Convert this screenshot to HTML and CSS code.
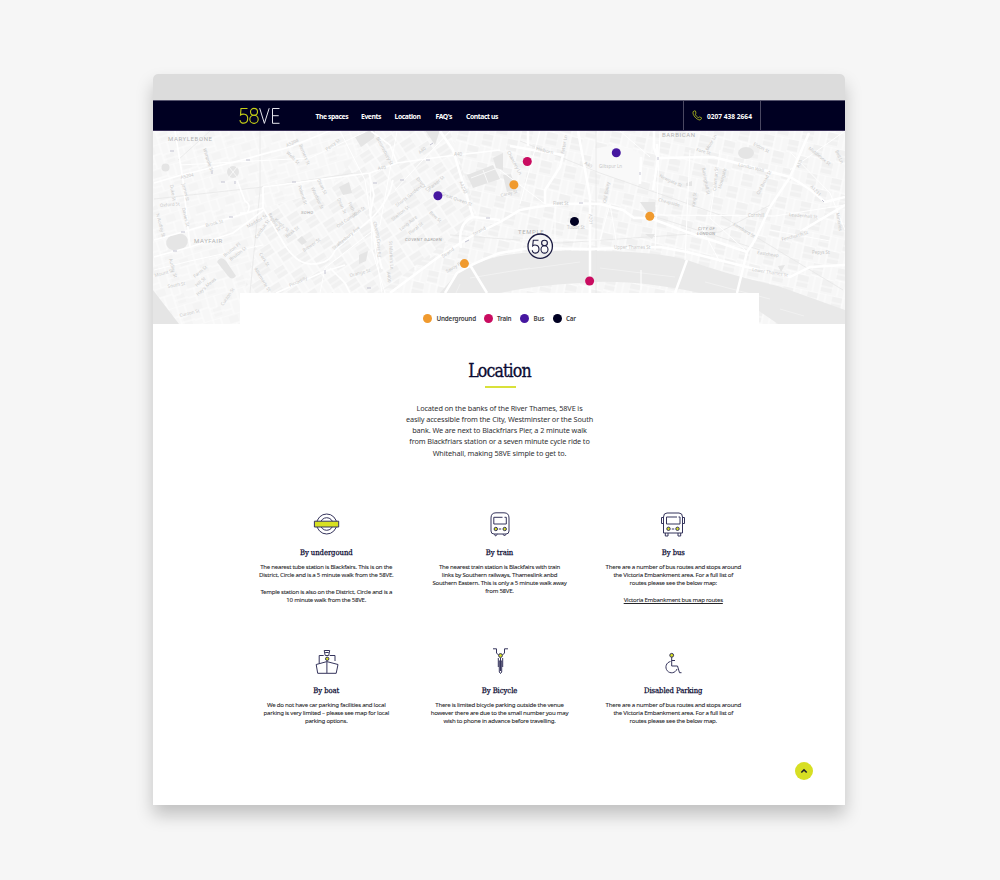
FILE: index.html
```html
<!DOCTYPE html>
<html lang="en">
<head>
<meta charset="utf-8">
<title>58VE – Location</title>
<link rel="stylesheet" href="styles.css">
</head>
<body>
<div class="browser">
  <div class="chrome"></div>
  <header class="header">
    <svg class="logo" viewBox="0 0 42 18" aria-label="58VE">
      <g class="logo-num"><path d="M8.500 1.500H2L1.500 8C3 6.700 8.700 6.300 8.700 11.500C8.700 17.600 1 17.300 1 13"/><ellipse cx="15" cy="4.800" rx="3.500" ry="3.400"/><ellipse cx="15" cy="12.300" rx="4.200" ry="4.100"/></g>
      <path class="logo-ve" d="M20.700 1.200L25.400 16.400L30.200 1.200M40.500 1.500H33.500V16.300H40.500M33.500 8.700H39.700"/>
    </svg>
    <nav class="nav"><a class="n1">The spaces</a><a class="n2">Events</a><a class="n3">Location</a><a class="n4">FAQ's</a><a class="n5">Contact us</a></nav>
    <div class="phone">
      <svg viewBox="0 0 10 11"><path d="M2.600.800L1.100 1.700C.1 4.900 4.700 9.900 8 10L9.500 8.800L9.300 7.600L7.300 6.900L6.400 7.600C4.800 6.900 3.700 5.500 3.200 4.100L4 3.200L3.500 1.100Z"/></svg>
      <span>0207 438 2664</span>
    </div>
  </header>
  <section class="map">
    <svg class="map-art" viewBox="153 131 692 193">
      <defs>
        <pattern id="pa" width="31" height="23" patternUnits="userSpaceOnUse" patternTransform="rotate(-17)"><path fill="#f4f4f4" d="M2 2h9v7H2zM20 12h8v9h-8z"/><path class="st" d="M0 0H31M0 10H17M17 0V23M8 10V23M25 0V12H17M17 17H31M0 18H8"/></pattern>
        <pattern id="pb" width="27" height="25" patternUnits="userSpaceOnUse" patternTransform="rotate(-33)"><path fill="#f1f1f1" d="M1 1h11v10H1zM14 13h12v11h-12z"/><path class="st" d="M0 0H27M0 12H27M13 0V25M6 12V25M20 0V12M13 19H27M0 6H13"/></pattern>
        <pattern id="pc" width="25" height="29" patternUnits="userSpaceOnUse" patternTransform="rotate(12)"><path fill="#f1f1f1" d="M1 1h10v11H1zM13 15h11v12h-11z"/><path class="st" d="M0 0H25M0 13L25 15M12 0V29M5 13V29M19 0V15M12 22H25M0 7H12"/></pattern>
      </defs>
      <path fill="#f7f7f7" d="M153 131H845V324H153z"/>
      <path fill="url(#pa)" d="M153 131H375L330 190L264 208L244 324H153z"/>
      <path fill="url(#pb)" d="M375 131H450L478 217L440 255L380 293H244L264 208L330 190z"/>
      <path fill="url(#pc)" d="M450 131H845V324H740V293H380L478 217z"/>
      <path fill="#f9f9f9" d="M592 150Q620 140 642 155L640 184L596 174z"/>
      <g class="park">
        <ellipse cx="177" cy="242" rx="11" ry="8.500" transform="rotate(-12 177 242)"/><circle cx="233" cy="172" r="6"/><circle cx="165.500" cy="167.500" r="4"/>
        <path d="M355 137l16-7h4l-1 8-13 9z"/><path d="M425 130h15l-5 15z"/><path d="M467 175l26-10 7 14-27 9z"/><path d="M493 158l10-5v17l-7-2z"/><path d="M339 187l10-5 3 11-9 2z"/><path d="M359 255l9-4-2 10-7 3z"/><path d="M297 240l5-4 5 6-5 3z"/><path d="M217 262q4-7 9-1l10 15q-4 5-8 0z"/><path d="M153 290l26 34h-26z"/>
        <ellipse cx="746" cy="153" rx="8" ry="6"/><path d="M640 202h15v10h-8z"/><path d="M503 175l8-1 5 16-9 2z"/><path d="M645 234h10l-3 5zM686 183l6-2v5h-6zM778 266l7-1-4 7z"/>
      </g>
      <path d="M229 167l8 10m0-10l-8 10M471 178l24-9M483 170l5 13" stroke="#f8f8f8" fill="none"/>
      <path fill="#e9e9e9" d="M440 293L457 273Q475 262 500 256Q535 250 590 251Q655 251 687 260Q732 276 778 286L845 310V324H778L759 311L700 293Q630 278 580 283Q535 285 500 293z"/>
      <path d="M780 309l24 7M460 284l-4 9M520 270l60-8M600 268l75 9M705 282l65 17M470 278l60-10" stroke="#f1f1f1" fill="none"/>
      <path d="M154 199L263 187L355 173M260 131V190L247 324M520 141L600 173L720 215L843 290M450 235L560 243L720 232L770 205M596 131V293M178 160L210 131M650 215L760 250" stroke="#e7e7e7" stroke-width=".8" fill="none"/>
      <g class="road minor">
        <path d="M180 165L310 158L365 132M154 270L190 261L263 245M320 293L325 268L380 225L397 131M340 131L365 180L382 293M370 173L372 250L385 293M395 190L450 131M500 170L545 204L590 205M520 240L600 240L610 204M660 131L655 250M690 150L685 260M720 150L710 218L745 250M655 215L775 216L845 205M770 230L830 241M800 231L845 205M790 170L845 131M540 131L520 204M620 131L650 157M641 270V290M610 204L616 240M790 152L830 193L845 230M700 225L720 262M555 204V240"/>
      </g>
      <g class="road">
        <path d="M154 183L178 176L238 161L290 147L332 130M263 187L370 173L397 163L440 157L500 150M154 240L183 232L263 208M154 257L190 247L233 233L264 210M175 131L183 180L190 247M237 180L245 201Q252 205 247 213L240 213M397 163L390 145L371 131"/>
        <path d="M263 187V208L280 237Q295 265 312 264Q330 264 335 250L373 217Q390 199 393 180M330 268L345 283L350 293M276 293L323 272L345 265M369 173L374 195L370 215L382 269" />
        <path class="wide" d="M440 131L453 150L473 217Q457 223 461 248M473 217L500 220M390 293L437 258L470 237L500 222L520 210Q560 202 600 204L623 210L634 218L650 218L687 232L747 252L755 240L770 207L790 177L809 133M578 131L590 197V293M657 144L658 158L713 157L733 162L790 177Q810 188 825 202L845 197M654 131V148L658 158L653 190M545 204V190L560 167L563 155L533 150L510 146M641 157L640 184M528 131V146"/>
        <path class="wide" d="M445 293L457 273Q475 262 500 253L530 248L588 249L660 247L687 252L747 267L790 277L810 267L845 265M470 265L487 293M687 260L675 293M747 252L737 293M803 230L845 205"/>
      </g>
      <g class="arrows"><path d="M170 151h4M246 160h4M221 182h4M212 171v3M235 181v3M229 217h4M181 232h4M292 182h4M373 183h4M426 160h4M400 180h4M430 145l3-2M465 242l4-2M486 218h4M173 251h4M640 175v-3M658 157v3M579 203h4M822 200l2 2M367 288h4M325 270v4"/></g>
      <g class="labels">
        <text x="168" y="140.500" class="area">MARYLEBONE</text><text x="194" y="242.500" class="area">MAYFAIR</text><text x="662" y="137" class="area">BARBICAN</text><text x="518" y="233.500" class="area">TEMPLE</text>
        <text x="301" y="214" class="sm">SOHO</text><text x="405" y="241" class="sm">COVENT GARDEN</text><text x="698" y="229.500" class="sm">CITY OF</text><text x="697" y="234.500" class="sm">LONDON</text>
        <text transform="translate(203 149) rotate(72)">Wimpole St</text><text transform="translate(181 179) rotate(-12)">A5204</text><text transform="translate(287 147) rotate(-25)">A5204</text><text transform="translate(286 153) rotate(45)">Wells St</text><text transform="translate(299 145) rotate(68)">Berners St</text><text transform="translate(327 151) rotate(-38)">Percy St</text><text transform="translate(376 138) rotate(62)">Bloomsbury St</text><text transform="translate(378 170) rotate(-8)">A40</text><text transform="translate(420 154) rotate(-40)">A40</text><text transform="translate(454 156)">A40</text><text transform="translate(459 182) rotate(65)">A4200</text><text transform="translate(160 207) rotate(-5)">Oxford St</text><text transform="translate(170 185) rotate(80)">Duke St</text><text transform="translate(182 184) rotate(76)">James St</text><text transform="translate(182 208) rotate(77)">Davies St</text><text transform="translate(156 214) rotate(75)">N Audley St</text><text transform="translate(206 227) rotate(-15)">Brook St</text><text transform="translate(248 228) rotate(-30)">Maddox St</text><text transform="translate(257 239) rotate(-55)">Conduit St</text><text transform="translate(268 214) rotate(60)">Regent St</text><text transform="translate(274 220) rotate(42)">Kingly St</text><text transform="translate(287 238) rotate(-38)">Beak St</text><text transform="translate(304 252) rotate(-35)">Brewer St</text><text transform="translate(298 186) rotate(72)">Poland St</text><text transform="translate(311 188) rotate(65)">Wardour St</text><text transform="translate(317 180) rotate(63)">Dean St</text><text transform="translate(337 199) rotate(65)">Dean St</text><text transform="translate(348 203) rotate(65)">Frith St</text><text transform="translate(338 228) rotate(-35)">Old Compton St</text><text transform="translate(334 250) rotate(-40)">Shaftesbury Ave</text><text transform="translate(373 222) rotate(75)">Charing</text><text transform="translate(377 239) rotate(88)">Cross Rd</text><text transform="translate(389 241) rotate(87)">St Martin's Ln</text><text transform="translate(397 207) rotate(-38)">Shorts Gardens</text><text transform="translate(393 221) rotate(-39)">Shelton St</text><text transform="translate(401 231) rotate(-39)">Long Acre</text><text transform="translate(410 235) rotate(-39)">Floral St</text><text transform="translate(416 179) rotate(47)">Drury Ln</text><text transform="translate(430 190) rotate(-40)">Parker St</text><text transform="translate(441 195) rotate(20)">Great Queen St</text><text transform="translate(429 213) rotate(42)">Bow St</text><text transform="translate(443 258) rotate(-35)">Strand</text><text transform="translate(474 236) rotate(-30)">Strand</text><text transform="translate(447 273) rotate(-30)">Savoy Pl</text><text transform="translate(387 272) rotate(85)">A400</text><text transform="translate(350 277) rotate(-14)">Orange St</text><text transform="translate(290 287) rotate(-24)">Piccadilly</text><text transform="translate(225 257) rotate(-38)">Bruton Pl</text><text transform="translate(231 261) rotate(-38)">Bruton St</text><text transform="translate(259 254) rotate(57)">Cork St</text><text transform="translate(254 269) rotate(58)">Albemarle St</text><text transform="translate(169 259) rotate(75)">Audley St</text><text transform="translate(155 277) rotate(-15)">Mount St</text><text transform="translate(168 288) rotate(-10)">South St</text><text transform="translate(195 278) rotate(-40)">Farm St</text><text transform="translate(197 287) rotate(-42)">Hill St</text><text transform="translate(198 296) rotate(-42)">Hay's Mews</text><text transform="translate(223 306) rotate(-55)">Curzon St</text><text transform="translate(180 317) rotate(-14)">Curzon St</text>
        <text transform="translate(536 150) rotate(14)">Holborn</text><text transform="translate(507 152) rotate(62)">Chancery Ln</text><text transform="translate(584 164) rotate(30)">A40</text><text transform="translate(599 168)">Giltspur Ln</text><text transform="translate(501 197) rotate(-14)">Carey St</text><text transform="translate(553 205)">Fleet St</text><text transform="translate(567 229)">Tudor St</text><text transform="translate(589 214) rotate(88)">A201</text><text transform="translate(606 203) rotate(-80)">Old Bailey</text><text transform="translate(564 154) rotate(-80)">Fetter Ln</text><text transform="translate(659 177) rotate(25)">Newgate St</text><text transform="translate(658 201) rotate(15)">Cheapside</text><text transform="translate(695 207) rotate(-85)">King St</text><text transform="translate(702 168) rotate(80)">Basinghall St</text><text transform="translate(716 191) rotate(-85)">Coleman St</text><text transform="translate(721 189) rotate(-75)">Moorgate</text><text transform="translate(738 166) rotate(13)">London Wall</text><text transform="translate(759 195) rotate(-62)">Old Broad St</text><text transform="translate(748 217)">Cornhill</text><text transform="translate(789 216) rotate(5)">Leadenhall St</text><text transform="translate(782 241) rotate(-15)">Fenchurch St</text><text transform="translate(733 225) rotate(32)">Lombard St</text><text transform="translate(757 254) rotate(8)">Eastcheap</text><text transform="translate(812 254)">Pepys St</text><text transform="translate(614 249)">Upper Thames St</text><text transform="translate(752 271) rotate(9)">Lower Thames St</text><text transform="translate(696 151) rotate(15)">Fore St</text><text transform="translate(753 145) rotate(28)">Eldon St</text><text transform="translate(799 168) rotate(-65)">A10</text><text transform="translate(810 187) rotate(45)">A1211</text><text transform="translate(808 149) rotate(38)">Middlesex St</text><text transform="translate(835 151) rotate(65)">Bell Ln</text><text transform="translate(708 151) rotate(-60)">Moor Ln</text><text transform="translate(836 213) rotate(80)">Minories</text>
      </g>
      <g>
        <g fill="#f09a2e"><circle cx="513.900" cy="184.700" r="4.500"/><circle cx="649.800" cy="216.200" r="4.500"/><circle cx="464.400" cy="263.600" r="4.500"/></g>
        <g fill="#c90c60"><circle cx="527.300" cy="161.500" r="4.500"/><circle cx="589.600" cy="281" r="4.500"/></g>
        <g fill="#4617a0"><circle cx="616.300" cy="152.700" r="4.500"/><circle cx="437.900" cy="195.700" r="4.500"/></g>
        <circle fill="#000022" cx="574.500" cy="221.400" r="4.500"/>
        <g class="pin"><circle cx="540.200" cy="246.200" r="12.200"/><g stroke-width="1.100"><path d="M538.500 240.300H533.300L532.700 245.800C534 244.600 539 244.300 539 249C539 254.400 532.300 254.200 532.300 250.200"/><ellipse cx="544.500" cy="243" rx="2.900" ry="2.700"/><ellipse cx="544.500" cy="249.400" rx="3.500" ry="3.700"/></g></g>
      </g>
    </svg>
  </section>
  <main class="main">
    <div class="legend"><span class="under">Underground</span><span class="train">Train</span><span class="bus">Bus</span><span class="car">Car</span></div>
    <h1>Location</h1>
    <div class="rule"></div>
    <p class="intro">Located on the banks of the River Thames, 58VE is<br>easily accessible from the City, Westminster or the South<br>bank. We are next to Blackfriars Pier, a 2 minute walk<br>from Blackfriars station or a seven minute cycle ride to<br>Whitehall, making 58VE simple to get to.</p>
    <div class="grid">
      <article>
        <svg class="icon" viewBox="0 0 28 28"><circle cx="14" cy="14" r="10"/><circle cx="14" cy="14" r="6.300"/><path class="lime" d="M1.700 11.200H26V17H1.700z"/></svg>
        <h2>By undergound</h2>
        <p>The nearest tube station is Blackfairs. This is on the<br>District, Circle and is a 5 minute walk from the 58VE.</p><p>Temple station is also on the District, Circle and is a<br>10 minute walk from the 58VE.</p>
      </article>
      <article>
        <svg class="icon" viewBox="0 0 28 28"><path d="M5 21V8Q5 2.800 10 2.800H18Q23 2.800 23 8V21Q23 24 20 24H8Q5 24 5 21ZM16.500 7.300H7.800V14H20.300V7.300H18.500M12.800 19H15.200M8.500 24.200L9.500 26L11.500 24.200M17 24.200L18.500 26L20 24.200"/><circle class="lime" cx="9.800" cy="19" r="1.700"/><circle class="lime" cx="18.700" cy="19" r="1.700"/></svg>
        <h2>By train</h2>
        <p>The nearest train station is Blackfairs with train<br>links by Southern railways, Thameslink anbd<br>Southern Eastern. This is only a 5 minute walk away<br>from 58VE.</p>
      </article>
      <article>
        <svg class="icon" viewBox="0 0 28 28"><path d="M4.500 23V7Q4.500 3 8 3H20Q23.500 3 23.500 7V23ZM18 7H7.500V14H21V7H19.500M12.800 19H15.200M4.500 7.500H2.500V13.500H4.500M23.500 7.500H25.500V13.500H23.500M6.300 23V26H9V23M19 23V26H21.700V23"/><circle class="lime" cx="9.500" cy="18.800" r="1.700"/><circle class="lime" cx="18.500" cy="18.800" r="1.700"/></svg>
        <h2>By bus</h2>
        <p>There are a number of bus routes and stops around<br>the Victoria Embankment area. For a full list of<br>routes please see the below map:</p><p><a>Victoria Embankment bus map routes</a></p>
      </article>
      <article>
        <svg class="icon" viewBox="0 0 28 28"><path d="M5 25.300L3.500 16.500L14.200 13.600L25.300 16.500L23.500 25.300ZM14.200 13.600V25M6.500 15.500V7.500H11M17 7.500H22.300V13M11.500 2.500H17L16 7.500H12.500Z"/><path d="M12.500 4.500H16"/><circle class="lime" cx="14.500" cy="10.800" r="1.700"/></svg>
        <h2>By boat</h2>
        <p>We do not have car parking facilities and local<br>parking is very limited – please see map for local<br>parking options.</p>
      </article>
      <article>
        <svg class="icon" viewBox="0 0 28 28"><path d="M7 .8H10.500V5L13 7.500M22 .8H18.500V5L16 7.500M12.300 10V19M16.700 10V19M13.300 13Q14.500 11 15.700 13V24Q14.500 27 13.300 24ZM14.500 10V23"/><circle class="lime" cx="14.500" cy="7.500" r="1.900"/></svg>
        <h2>By Bicycle</h2>
        <p>There is limited bicycle parking outside the venue<br>however there are due to the small number you may<br>wish to phone in advance before travelling.</p>
      </article>
      <article>
        <svg class="icon" viewBox="0 0 28 28"><path d="M12.700 9V18H18.500L20.500 24.700H22.500M12.700 12.500H16M11.500 13.500A5.700 5.700 0 1 0 18 21"/><circle class="lime" cx="12.700" cy="7.300" r="1.900"/></svg>
        <h2>Disabled Parking</h2>
        <p>There are a number of bus routes and stops around<br>the Victoria Embankment area. For a full list of<br>routes please see the below map.</p>
      </article>
    </div>
    <button class="top" aria-label="Back to top"><svg viewBox="0 0 18 18"><path d="M6.300 10.500L9 7.900L11.700 10.500"/></svg></button>
  </main>
</div>
</body>
</html>
```
FILE: styles.css
```css
* { box-sizing: border-box; }
body { margin: 0; height: 880px; overflow: hidden; background: #f6f6f6; font-family: "Noto Sans", sans-serif; color: #262629; padding: 74px 0 0 153px; }
.browser { width: 692px; height: 731px; background: #fff; border-radius: 5px 5px 0 0; box-shadow: 0 10px 17px rgba(0,0,0,.22); }
.chrome { height: 26px; background: #dcdcdc; border-radius: 5px 5px 0 0; }
.header { height: 31px; background: #000022; border-top: 1px solid #57556f; border-bottom: 1px solid #3a3158; display: flex; align-items: center; padding-left: 86px; color: #fff; font-size: 6.6px; font-weight: 700; }
.logo { width: 42px; height: 18px; fill: none; }
.logo-num { stroke: #c5cf17; stroke-width: 1.1; }
.logo-ve { stroke: #e4e4ec; stroke-width: 1; }
.nav { display: flex; width: 249px; margin-left: 34.500px; padding-top: 1px; white-space: nowrap; letter-spacing: -.42px; font-size: 6.800px; }
.n1 { width: 45.500px; }
.n2 { width: 33.500px; }
.n3 { width: 41px; }
.n4 { width: 30.500px; }
.phone { height: 29px; width: 78px; margin-left: 118.500px; border: solid #4a4862; border-width: 0 1px; display: flex; align-items: center; gap: 5px; padding-left: 8px; white-space: nowrap; }
.phone svg { width: 10px; height: 11px; fill: none; stroke: #bdc91c; stroke-width: .8; }
.phone span { padding-top: 1px; }
.map { height: 193px; overflow: hidden; }
.map-art { width: 692px; height: 193px; display: block; }
.st { stroke: #fff; stroke-width: .7; fill: none; }
.park { fill: #e5e5e5; }
.road { fill: none; stroke: #fff; stroke-width: 1.700; }
.road.minor { stroke-width: 1; }
.road .wide { stroke-width: 2.500; }
.arrows { stroke: #b4b4c6; stroke-width: .8; }
.labels { font-size: 4.500px; fill: #c9c9c9; }
.labels .area { font-family: Roboto, sans-serif; font-size: 6px; letter-spacing: .6px; fill: #b3b3b3; }
.labels .sm { font-family: Roboto, sans-serif; font-size: 4.300px; letter-spacing: .3px; font-style: italic; fill: #a0a0a0; }
.pin { fill: rgba(255,255,255,.2); stroke: #1b1b42; stroke-width: 1.300; }
.main { position: relative; width: 519px; height: 512px; margin: -31px 0 0 87px; background: #fff; }
.legend { display: flex; padding: 20px 0 0 183px; height: 30px; font-size: 6.300px; font-weight: 600; line-height: 11px; white-space: nowrap; letter-spacing: -.18px; color: #3b3b3e; }
.legend span { display: flex; align-items: center; }
.legend span::before { content: ""; width: 9px; height: 9px; margin-right: 4.500px; border-radius: 50%; background: #f09a2e; }
.legend .under { width: 60.500px; }
.legend .train { width: 36.500px; }
.legend .bus { width: 32.500px; }
.legend .train::before { background: #c90c60; }
.legend .bus::before { background: #4617a0; }
.legend .car::before { background: #000022; }
h1, h2 { font-family: "DejaVu Serif Condensed", "DejaVu Serif", serif; font-stretch: condensed; font-weight: 400; color: #0b0b32; text-align: center; margin: 0; white-space: nowrap; }
h1 { font-size: 17.600px; line-height: 24px; letter-spacing: -.85px; padding-top: 36px; -webkit-text-stroke: .3px; }
.rule { width: 31px; height: 2px; margin: 3px auto 0 245px; background: #d9e13a; }
.intro { margin: 14.500px 0 0; text-align: center; font-size: 7.300px; line-height: 11.300px; letter-spacing: -.11px; white-space: nowrap; color: #303033; }
.grid { display: grid; grid-template-columns: 173.500px 173px 174.500px; grid-template-rows: 138px 90px; margin: 51.500px 0 0 -.5px; text-align: center; }
article { font-size: 6.100px; line-height: 8px; letter-spacing: -.26px; white-space: nowrap; -webkit-text-stroke: .08px; }
article p { margin: 0 0 8.500px; }
.icon { display: block; width: 28px; height: 28px; margin: 0 auto; fill: none; stroke: #35345c; stroke-width: 1; }
article:nth-child(3n+1) .icon { translate: .7px 0; }
.icon .lime { fill: #d7e021; }
h2 { font-size: 7.600px; line-height: 12px; letter-spacing: -.04px; margin: 8.500px 0 4.500px; -webkit-text-stroke: .25px; }
article a { text-decoration: underline; }
.top { position: absolute; left: 555px; top: 469px; width: 18px; height: 18px; border: 0; padding: 0; border-radius: 50%; background: #d7df23; }
.top svg { display: block; fill: none; stroke: #20202a; stroke-width: 1.500; }
```
